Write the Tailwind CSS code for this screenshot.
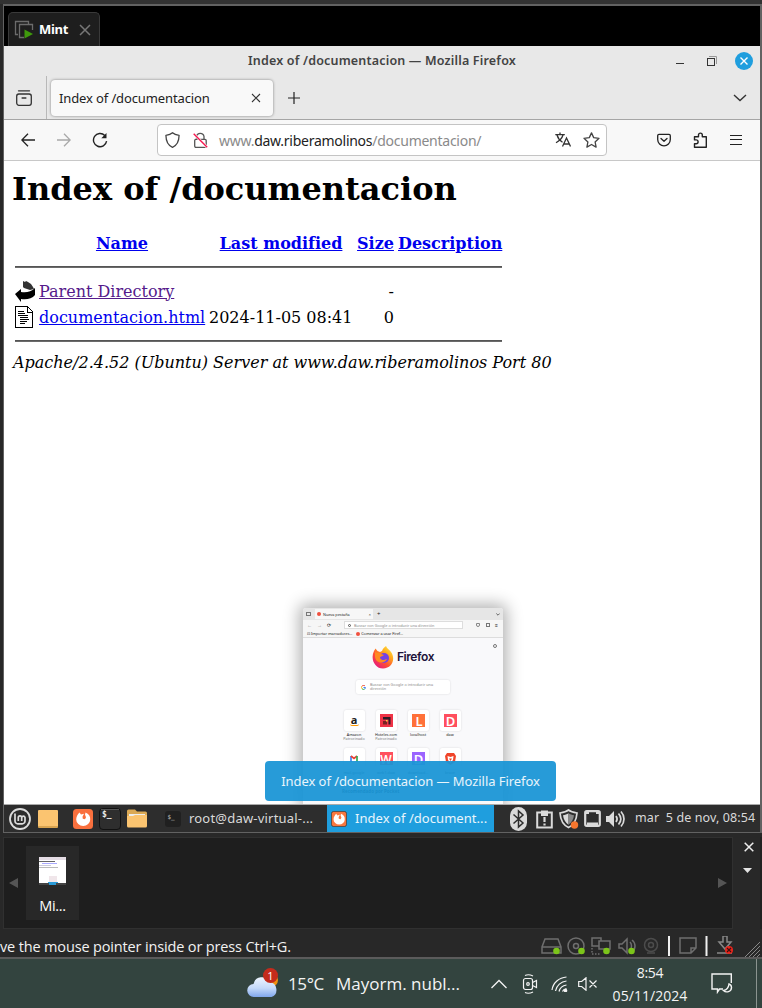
<!DOCTYPE html>
<html lang="es">
<head>
<meta charset="utf-8">
<title>Index of /documentacion</title>
<script src="https://cdn.jsdelivr.net/npm/@tailwindcss/browser@4"></script>
</head>
<body class="w-[762px] h-[1008px] overflow-hidden bg-[#282828] flex flex-col font-['Noto_Sans',sans-serif]">
<div class="h-1 shrink-0 bg-[#323232]"></div>

<!-- Virtual machine window -->
<div class="h-[829px] shrink-0 flex">
  <div class="w-[3px] shrink-0"></div>
  <main class="relative w-[759px] h-[829px] border-t-2 border-r-2 border-b border-l border-[#626262] flex flex-col">
    <div class="h-10 shrink-0 bg-black pl-1 pt-1.5">
      <div class="w-[92px] h-[34px] rounded-t-[5px] border border-b-0 border-[#3a3a3a] bg-[#1e1e1e] flex items-center pl-[5px]">
        <svg class="w-[20px] h-[19px] shrink-0" viewBox="0 0 20 19" fill="none"><path d="M4 14.500H1.500V1.500H14.500V4" stroke="#6c6c6c" stroke-width="1.300"/><path d="M10 17.500H5.500V4.500H18.500V10" stroke="#6c6c6c" stroke-width="1.300"/><path d="M10.500 9.500L19 14l-8.500 4.500z" fill="#3f9a0c"/></svg>
        <span class="ml-[5px] w-[29px] text-[13px] font-bold text-white tracking-[-0.3px] leading-none whitespace-nowrap">Mint</span>
        <svg class="ml-[11px] w-3 h-3" viewBox="0 0 12 12"><path d="M1 1l10 10M11 1L1 11" stroke="#777" stroke-width="1.500"/></svg>
      </div>
    </div>

    <!-- Firefox title bar and tabs -->
    <div class="h-[74px] shrink-0 bg-[#e8e8e8] border-b border-[#a5a5a5] flex flex-col">
      <div class="h-[30px] shrink-0 relative flex items-center justify-center">
        <span class="pt-px text-[12.500px] font-semibold text-[#434343] tracking-[0.18px] whitespace-nowrap">Index of /documentacion — Mozilla Firefox</span>
        <div class="absolute right-[7px] top-[6px] flex items-center">
          <svg class="w-[54px] h-[18px]" viewBox="0 0 54 18" fill="none" stroke="#333"><path d="M2 11.500h8"/><rect x="33.500" y="6.500" width="7" height="7"/><path d="M35 4.500h7.500V12" stroke="#999"/></svg>
          <svg class="w-[18px] h-[18px] ml-[7px]" viewBox="0 0 18 18"><circle cx="9" cy="9" r="9" fill="#1f9ede"/><path d="M5.500 5.500l7 7M12.500 5.500l-7 7" stroke="#fff" stroke-width="1.400"/></svg>
        </div>
      </div>
      <div class="flex-1 flex">
        <div class="w-[43px] border-r border-[#b8b8b8] flex items-center pl-3">
          <svg class="w-4 h-4" viewBox="0 0 16 16" fill="none" stroke="#333" stroke-width="1.300" stroke-linecap="round"><path d="M2.500 .8h11"/><rect x=".7" y="4" width="14.600" height="11.300" rx="2.200"/><path d="M6.200 8h3.600" stroke-width="1.600"/></svg>
        </div>
        <div class="ml-[4px] mt-[4px] w-[222px] h-[36px] rounded-[4px] bg-[#f9f9f9] shadow-[0_0_3px_rgba(0,0,0,0.45)] flex items-center">
          <span class="ml-[8px] w-[192px] pt-px text-[13px] tracking-[-0.12px] text-[#222] whitespace-nowrap">Index of /documentacion</span>
          <svg class="w-[10px] h-[10px]" viewBox="0 0 10 10"><path d="M1 1l8 8M9 1L1 9" stroke="#333" stroke-width="1.100"/></svg>
        </div>
        <svg class="ml-[14px] mt-[15px] w-[14px] h-[14px]" viewBox="0 0 14 14"><path d="M7 1v12M1 7h12" stroke="#222" stroke-width="1.200"/></svg>
        <svg class="ml-auto mr-[13px] mt-[17px] w-[14px] h-[10px]" viewBox="0 0 14 10"><path d="M1 2l6 5.500L13 2" fill="none" stroke="#333" stroke-width="1.400"/></svg>
      </div>
    </div>

    <!-- Navigation bar -->
    <div class="h-[41px] shrink-0 bg-[#f8f8f8] border-b border-[#c8c8c8] flex items-center">
      <svg class="ml-[17px] w-[14px] h-[14px]" viewBox="0 0 14 14" fill="none" stroke="#222" stroke-width="1.300"><path d="M14 7H.8M7 .8L.8 7 7 13.200"/></svg>
      <svg class="ml-[22px] w-[14px] h-[14px]" viewBox="0 0 14 14" fill="none" stroke="#a8a8a8" stroke-width="1.300"><path d="M0 7h13.200M7 .8L13.200 7 7 13.200"/></svg>
      <svg class="ml-[21px] w-4 h-4" viewBox="0 0 16 16" fill="none" stroke="#222" stroke-width="1.400"><path d="M12.800 3.500A6.600 6.600 0 1 0 14.600 9.200"/><path d="M14.500 1v5.200H9.300z" fill="#222" stroke="none"/></svg>
      <div class="ml-[49px] w-[450px] h-8 rounded-[4px] border border-[#c4c4c4] bg-white flex items-center">
        <svg class="ml-[7px] w-[15px] h-4 shrink-0" viewBox="0 0 15 16" fill="none" stroke="#444" stroke-width="1.300"><path d="M7.500.8C6 2.200 3.500 3 .9 3.300 1 9 3 13.500 7.500 15.300 12 13.500 14 9 14.100 3.300 11.500 3 9 2.200 7.500.8z" stroke-linejoin="round"/></svg>
        <svg class="ml-[13px] w-[15px] h-4 shrink-0" viewBox="0 0 15 16" fill="none" stroke="#555" stroke-width="1.300"><path d="M3.500 7V4.500a3.800 3.800 0 0 1 7.500 0V7"/><rect x="1.700" y="7.300" width="11.500" height="8" rx="1.200"/><path d="M.7 1.800l13.500 13.500" stroke="#fff" stroke-width="2.600"/><path d="M.7 1.800l13.500 13.500" stroke="#f5174f" stroke-width="1.400"/></svg>
        <span class="ml-[11px] w-[336px] text-[14px] tracking-[-0.26px] text-[#8a8a8a] whitespace-nowrap">www.<span class="text-[#222]">daw.riberamolinos</span>/documentacion/</span>
        <svg class="w-4 h-4 shrink-0" viewBox="0 0 16 16" fill="none" stroke="#333" stroke-width="1.300"><path d="M.3 2.700h9.500M5 .5v2M8 3C7 6.500 4 9 1 10.700M2 3c1 3.500 3.500 6 5.500 7.200"/><path d="M7.500 14.500L11.500 6l4 8.500M9 12h5"/></svg>
        <svg class="ml-3 w-[17px] h-4 shrink-0" viewBox="0 0 17 16" fill="none" stroke="#444" stroke-width="1.300" stroke-linejoin="round"><path d="M8.500.9l2.200 4.700 5.300.7-3.900 3.600 1 5.200-4.600-2.600-4.600 2.600 1-5.200L1 6.300l5.300-.7z"/></svg>
      </div>
      <svg class="ml-[50px] w-[14px] h-[14px]" viewBox="0 0 14 14" fill="none" stroke="#222" stroke-width="1.300"><path d="M2 1.400h10a1.300 1.300 0 0 1 1.300 1.300V6.500a6.300 6.300 0 0 1-12.600 0V2.700A1.300 1.300 0 0 1 2 1.400z"/><path d="M4 5.500l3 2.800 3-2.800" stroke-linecap="round" stroke-linejoin="round"/></svg>
      <svg class="ml-[22px] w-[15px] h-4" viewBox="0 0 15 16" fill="none" stroke="#222" stroke-width="1.400" stroke-linejoin="round"><path d="M1.500 7.500V4.700h4V3a1.900 1.900 0 0 1 3.800 0v1.700h4V15.200H1.500v-3.500h1.700a1.900 1.900 0 0 0 0-3.800H1.500z"/></svg>
      <svg class="ml-[22px] w-3 h-3" viewBox="0 0 12 12" shape-rendering="crispEdges"><path d="M0 1.500h12M0 5.500h12M0 10.500h12" stroke="#222"/></svg>
    </div>

    <!-- Directory listing -->
    <div class="h-[643px] shrink-0 bg-white text-black pl-2 pt-[10px] font-['DejaVu_Serif',serif] text-[16px] leading-[19px]">
      <h1 class="text-[32px] leading-[37px] font-bold">Index of /documentacion</h1>
      <table class="mt-[23px] w-[493px] table-fixed border-separate border-spacing-[2px] whitespace-nowrap">
        <colgroup><col class="w-[22px]"><col class="w-[168px]"><col class="w-[146px]"><col class="w-[39px]"><col class="w-[106px]"></colgroup>
        <tbody>
        <tr class="h-[22px] align-top"><th class="p-0"></th><th class="p-px"><a class="underline text-[#0000ee]">Name</a></th><th class="p-px"><a class="underline text-[#0000ee]">Last modified</a></th><th class="p-px"><a class="underline text-[#0000ee]">Size</a></th><th class="p-px"><a class="underline text-[#0000ee]">Description</a></th></tr>
        <tr class="h-5"><th colspan="5" class="p-px"><div class="h-[2px] bg-[#6b6b6b] border-t border-[#555]"></div></th></tr>
        <tr class="h-6"><td class="p-px"><svg class="block w-5 h-[22px]" viewBox="0 0 20 22"><path d="M8 1l2 1 1-1 2 1 3 2 2 3 1 2-4 1-3-1-3-1-1-1z" fill="#333"/><path d="M0 14l6-5v3c5 1 10 0 14-4v7c-3 4-9 5-14 4v3z" fill="#000"/></svg></td><td class="p-px"><a class="underline text-[#551a8b]">Parent Directory</a></td><td class="p-px"></td><td class="p-px text-right">-</td><td></td></tr>
        <tr class="h-6"><td class="p-px"><svg class="block w-5 h-[22px]" viewBox="0 0 20 22" shape-rendering="crispEdges"><path d="M.5.5h12l5 5v16H.5z" fill="#fff" stroke="#000"/><path d="M12.500 0v6H18" fill="none" stroke="#000"/><path d="M3 5.500h6M3 7.500h7M3 9.500h10M5 11.500h8M5 13.500h9M5 15.500h7M5 17.500h5" stroke="#000"/></svg></td><td class="p-px"><a class="underline text-[#0000ee]">documentacion.html</a></td><td class="p-px">2024-11-05 08:41</td><td class="p-px text-right">0</td><td></td></tr>
        <tr class="h-5"><th colspan="5" class="p-px"><div class="h-[2px] bg-[#6b6b6b] border-t border-[#555]"></div></th></tr>
        </tbody>
      </table>
      <address class="pl-px italic whitespace-nowrap">Apache/2.4.52 (Ubuntu) Server at www.daw.riberamolinos Port 80</address>
    </div>

    <!-- Desktop panel -->
    <div class="relative z-20 flex-1 border-t border-[#aaa] bg-[#2d2d2d] flex items-center text-[13px] text-[#dadada]">
      <svg class="ml-[5px] w-[22px] h-[22px]" viewBox="0 0 22 22" fill="none" stroke="#dcdcdc"><circle cx="11" cy="11" r="10" stroke-width="1.800"/><path d="M6 5.500v7.500a2.800 2.800 0 0 0 2.800 2.800h4.400A2.800 2.800 0 0 0 16 13V9.500a1.700 1.700 0 0 0-3.300 0V13M12.700 9.500a1.700 1.700 0 0 0-3.400 0V13" stroke-width="1.700"/></svg>
      <div class="ml-[7px] w-5 h-[18px] rounded-[1px] bg-[#fbc470] border-b-2 border-[#d9a450]"></div>
      <svg class="ml-[15px] w-[20px] h-[20px]" viewBox="0 0 20 20"><rect width="20" height="20" rx="3.500" fill="#f9703e"/><path d="M6.500 3.500l1.500 2 3-.8-1.500 3 .3 2 2.200.5 1-2-1-2.500.5-2.200c3.300 1.300 5 4 4.700 7a7 6.500 0 0 1-14 0C3.200 8 4.500 5.500 6.500 3.500z" fill="#fff"/></svg>
      <svg class="ml-[6px] w-[22px] h-[22px]" viewBox="0 0 22 22"><rect x=".5" y=".5" width="21" height="21" rx="3.500" fill="#2e2e2e" stroke="#111"/><path d="M2 1.500h18" stroke="#555"/><text x="3" y="9" font-family="DejaVu Sans Mono" font-size="8" font-weight="bold" fill="#eee">$_</text></svg>
      <svg class="ml-[6px] w-[20px] h-[19px]" viewBox="0 0 20 19"><path d="M0 2a1.500 1.500 0 0 1 1.500-1.500H8l2 2h8.500A1.500 1.500 0 0 1 20 4v13H0z" fill="#dba955"/><path d="M2 5h16v3H2z" fill="#eee"/><path d="M0 7h6l2-1h12v11a1.500 1.500 0 0 1-1.500 1.500h-17A1.500 1.500 0 0 1 0 17z" fill="#fbc470"/></svg>
      <svg class="ml-[18px] w-[16px] h-[16px]" viewBox="0 0 16 16"><rect width="16" height="16" rx="3" fill="#202020"/><text x="2.500" y="7.500" font-family="DejaVu Sans Mono" font-size="6" font-weight="bold" fill="#999">$_</text></svg>
      <span class="ml-[8px] w-[138px] shrink-0 tracking-[0.2px] whitespace-nowrap">root@daw-virtual-...</span>
      <div class="w-[167px] h-full shrink-0 bg-[#1f9ede] text-white/90 flex items-center">
        <svg class="ml-[4px] w-4 h-4" viewBox="0 0 20 20"><rect x=".5" y=".5" width="19" height="19" rx="3" fill="#f9773e" stroke="#463c38"/><path d="M6.500 3.500l1.500 2 3-.8-1.500 3 .3 2 2.200.5 1-2-1-2.500.5-2.200c3.300 1.300 5 4 4.700 7a7 6.500 0 0 1-14 0C3.200 8 4.500 5.500 6.500 3.500z" fill="#fff"/></svg>
        <span class="ml-[8px] tracking-[0.05px] whitespace-nowrap">Index of /document...</span>
      </div>
      <svg class="ml-4 w-[17px] h-6 shrink-0" viewBox="0 0 17 24"><rect width="17" height="24" rx="8.500" fill="#dadada"/><path d="M3.500 7.500l9.500 8.500-4.500 4V4L13 8l-9.500 8.500" fill="none" stroke="#2d2d2d" stroke-width="1.500"/></svg>
      <svg class="ml-[9px] w-[17px] h-5 shrink-0" viewBox="0 0 17 20"><path d="M1.200 3.500h14.600v15H1.200z" fill="none" stroke="#dadada" stroke-width="2"/><path d="M5 1.500h7V7H5z" fill="#dadada"/><path d="M8.500 8v5M8.500 14.500v2" stroke="#dadada" stroke-width="2.200"/></svg>
      <svg class="ml-[6px] w-[20px] h-[20px] shrink-0" viewBox="0 0 20 20"><path d="M9.500 1C7 3 4 3.500 1 4c.5 7 3 12 8.500 14.500C15 16 17.500 11 18 4 15 3.500 12 3 9.500 1z" fill="none" stroke="#dadada" stroke-width="1.700"/><path d="M9.500 4.200v11.500C6.500 13.500 4.500 10.500 4 6.200c2-.4 4-1 5.500-2z" fill="#dadada"/><path d="M9.500 4.200v11.500c3-2.200 5-5.200 5.500-9.500-2-.4-4-1-5.500-2z" fill="#888"/><circle cx="15.500" cy="16" r="3.700" fill="#f5762e"/></svg>
      <svg class="ml-[5px] w-[17px] h-[17px] shrink-0" viewBox="0 0 17 17"><rect x="1.200" y="1.200" width="14.600" height="14.600" rx="1.500" fill="none" stroke="#dadada" stroke-width="2.200"/><path d="M2 2h3v2H2zM12 2h3v2h-3zM3 12.500h11v3H3z" fill="#dadada"/></svg>
      <svg class="ml-[5px] w-[19px] h-[18px] shrink-0" viewBox="0 0 19 18"><path d="M0 6h3l5-5v16l-5-5H0z" fill="#dadada"/><path d="M10 6c1.500 2 1.500 4 0 6M12.500 3.500c3 3.500 3 7.500 0 11M15 1.500c4 4.500 4 10.500 0 15" fill="none" stroke="#dadada" stroke-width="1.700"/></svg>
      <span class="ml-[10px] text-[12.500px] tracking-[0.1px] whitespace-pre">mar  5 de nov, 08:54</span>
    </div>

    <!-- Window preview -->
    <div class="absolute z-10 left-[299px] top-[602px] w-[200px] h-[197px] bg-[#f9f9fb] rounded-t-[3px] shadow-[0_0_16px_4px_rgba(0,0,0,0.3)] text-[#222] text-[3.800px] leading-[5px] whitespace-nowrap flex flex-col">
      <div class="h-3 shrink-0 bg-[#e6e6e6] rounded-t-[3px] flex items-center pl-[3px]">
        <div class="w-[5px] h-[4px] border border-[#777]"></div>
        <div class="ml-[4px] w-[58px] h-[10px] bg-[#f7f7f7] flex items-center pl-[2px]"><div class="w-1 h-1 rounded-full bg-[#f0503e]"></div><span class="ml-[2px]">Nueva pestaña</span><span class="ml-auto mr-[2px]">×</span></div>
        <span class="ml-[4px] text-[6px]">+</span>
        <svg class="ml-auto mr-[3px] w-1 h-[3px]" viewBox="0 0 4 3"><path d="M.3.5L2 2.200 3.700.5" fill="none" stroke="#444" stroke-width=".8"/></svg>
      </div>
      <div class="h-[10px] shrink-0 bg-[#f6f6f6] flex items-center pl-[4px] text-[5px]">
        <span class="text-[#999]">←</span><span class="ml-[5px] text-[#999]">→</span><span class="ml-[5px]">⟳</span>
        <div class="ml-auto w-[119px] h-[8px] bg-white border-[0.500px] border-[#ddd] flex items-center pl-[3px] text-[3.800px] text-[#888]"><div class="w-[3px] h-[3px] mr-[3px] rounded-full border-[0.500px] border-[#555]"></div>Buscar con Google o introducir una dirección</div>
        <div class="ml-[13px] w-1 h-1 border border-[#888] rounded-b"></div><div class="ml-[6px] w-1 h-1 border border-[#777]"></div><span class="ml-[5px] mr-[5px]">≡</span>
      </div>
      <div class="h-[8px] shrink-0 bg-[#f6f6f6] border-b-[0.500px] border-[#ddd] flex items-center pl-[4px] text-[3.900px] tracking-[-0.05px]"><span>⊡ Importar marcadores...</span><div class="ml-[4px] w-1 h-1 rounded-full bg-[#f0503e]"></div><span class="ml-px">Comenzar a usar Firef...</span></div>
      <div class="h-[42px] shrink-0 relative flex justify-center pt-[8px]">
        <svg class="w-[22px] h-[23px]" viewBox="0 0 22 23"><defs><linearGradient id="fire" x1="1" y1="0" x2=".2" y2="1"><stop offset="0" stop-color="#fff44f"/><stop offset=".35" stop-color="#ffad1f"/><stop offset=".65" stop-color="#ff5030"/><stop offset="1" stop-color="#e31587"/></linearGradient></defs><path d="M2 5l1.500-2.500L5.500 5 8 6l2-1c1-3 3-4 4-5 1 3 3 3 5 6 5 7 1 16.500-8 16.500C3 22.500-2 13 2 5z" fill="url(#fire)"/><circle cx="12" cy="12" r="5" fill="#7542e5"/><path d="M3 6c2 1 4 0 6 2l3 1c-2 2-4 1-4 3 2 3 4 2 7 1-2 5-11 5-12-2z" fill="#ff8a20"/></svg>
        <span class="ml-[3px] mt-[5px] text-[12px] leading-[12px] font-semibold text-[#20123a] tracking-[-0.4px] font-['Inter',sans-serif]">Firefox</span>
        <div class="absolute right-[6px] top-[6px] w-[4px] h-[4px] rounded-full border border-[#777]"></div>
      </div>
      <div class="ml-[53px] w-[94px] h-[14px] shrink-0 bg-white rounded-[2px] shadow-[0_0_2px_rgba(0,0,0,0.15)] flex items-center pl-[5px] text-[#888]">
        <svg class="w-[5px] h-[5px]" viewBox="0 0 10 10" fill="none" stroke-width="2"><path d="M8 2A4 4 0 0 0 1.500 3" stroke="#ea4335"/><path d="M1.500 3A4 4 0 0 0 2 7.500" stroke="#fbbc05"/><path d="M2 7.500A4 4 0 0 0 7.500 8" stroke="#34a853"/><path d="M7.500 8A4 4 0 0 0 9 5H5" stroke="#4285f4"/></svg>
        <span class="ml-[4px] leading-[4px]">Buscar con Google o introducir una<br>dirección</span>
      </div>
      <div class="mt-[16px] ml-[35px] grid grid-cols-[32px_32px_32px_32px] text-center leading-[4px]">
        <div class="h-[38px] flex flex-col items-center"><div class="w-[21px] h-[21px] shrink-0 mb-[2px] rounded-[2px] bg-white shadow-[0_0_2px_rgba(0,0,0,0.15)] flex flex-col items-center justify-center"><b class="text-[11px] leading-[9px]">a</b><div class="w-[9px] h-[2px] rounded-b-full border-b border-[#f90]"></div></div>Amazon<br><span class="text-[#777]">Patrocinado</span></div>
        <div class="h-[38px] flex flex-col items-center"><div class="w-[21px] h-[21px] shrink-0 mb-[2px] rounded-[2px] bg-white shadow-[0_0_2px_rgba(0,0,0,0.15)] flex items-center justify-center"><svg class="w-[13px] h-[13px]" viewBox="0 0 13 13"><path d="M0 0h13v13H0z" fill="#ef3346"/><path d="M3 3h7.500v7.500H8.500v-5H3z" fill="#2b1b24"/><path d="M3 7h4v3.500H3z" fill="#722"/><path d="M6 6h1.500v1.500H6z" fill="#fc4"/></svg></div>Hoteles.com<br><span class="text-[#777]">Patrocinado</span></div>
        <div class="h-[38px] flex flex-col items-center"><div class="w-[21px] h-[21px] shrink-0 mb-[2px] rounded-[2px] bg-white shadow-[0_0_2px_rgba(0,0,0,0.15)] flex items-center justify-center"><div class="w-[13px] h-[13px] pl-[2px] bg-[#ff7139] text-white text-[13px] leading-[15px] font-semibold">L</div></div>localhost</div>
        <div class="h-[38px] flex flex-col items-center"><div class="w-[21px] h-[21px] shrink-0 mb-[2px] rounded-[2px] bg-white shadow-[0_0_2px_rgba(0,0,0,0.15)] flex items-center justify-center"><div class="w-[13px] h-[13px] pl-px bg-[#ff4f5e] text-white text-[13px] leading-[15px] font-semibold">D</div></div>daw</div>
        <div class="flex flex-col items-center"><div class="w-[21px] h-[21px] shrink-0 mb-[2px] rounded-[2px] bg-white shadow-[0_0_2px_rgba(0,0,0,0.15)] flex items-center justify-center"><svg class="w-2 h-[7px]" viewBox="0 0 8 7" fill="none" stroke-width="1.700"><path d="M1 7V1" stroke="#4285f4"/><path d="M1 1l3 2.500L7 1" stroke="#ea4335"/><path d="M7 1v6" stroke="#34a853"/></svg></div>mail.google</div>
        <div class="flex flex-col items-center"><div class="w-[21px] h-[21px] shrink-0 mb-[2px] rounded-[2px] bg-white shadow-[0_0_2px_rgba(0,0,0,0.15)] flex items-center justify-center"><div class="w-[13px] h-[13px] bg-[#ff4f5e] text-white text-[12px] leading-[15px] font-semibold">W</div></div>web1.daw</div>
        <div class="flex flex-col items-center"><div class="w-[21px] h-[21px] shrink-0 mb-[2px] rounded-[2px] bg-white shadow-[0_0_2px_rgba(0,0,0,0.15)] flex items-center justify-center"><div class="w-[13px] h-[13px] pl-px bg-[#9b64ff] text-white text-[13px] leading-[15px] font-semibold">D</div></div>download...</div>
        <div class="flex flex-col items-center"><div class="w-[21px] h-[21px] shrink-0 mb-[2px] rounded-[2px] bg-white shadow-[0_0_2px_rgba(0,0,0,0.15)] flex items-center justify-center"><svg class="w-[11px] h-[12px]" viewBox="0 0 11 12"><path d="M2 0h7l2 3-1 6-4.500 3L1 9 0 3z" fill="#f0452a"/><path d="M2.500 3l3 1 3-1-.5 4-2.500 3L3 7z" fill="#fff"/><path d="M4 5.500h3L5.500 8z" fill="#f0452a"/></svg></div>brave</div>
      </div>
      <div class="mt-[14px] ml-[39px] text-[4.500px] font-bold">Recomendado por Pocket</div>
    </div>
    <div class="absolute z-10 left-[261px] top-[755px] w-[291px] h-10 pt-px rounded-[4px] bg-[#1a95d6]/94 flex items-center justify-center text-[13px] text-white/90 tracking-[-0.06px] whitespace-nowrap">Index of /documentacion — Mozilla Firefox</div>
  </main>
</div>

<!-- Thumbnail bar -->
<div class="mt-1 h-[92px] shrink-0 flex">
  <div class="ml-[3px] w-[730px] h-[92px] border border-[#303030] bg-[#1e1e1e] flex items-center">
    <svg class="ml-[5px] w-[9px] h-[10px]" viewBox="0 0 9 10"><path d="M9 0v10L0 5z" fill="#555"/></svg>
    <div class="ml-2 w-[53px] h-[74px] bg-[#282828] flex flex-col items-center">
      <div class="mt-[11px] w-[27px] h-7 shrink-0 bg-white flex flex-col">
        <div class="h-[3px] bg-[#e4dce4]"></div><div class="mt-px w-[16px] h-px bg-[#666]"></div><div class="mt-px ml-[3px] w-[15px] h-px bg-[#aaf]"></div><div class="mt-px w-[12px] h-px bg-[#ccd]"></div><div class="mt-px w-[19px] h-px bg-[#bbb]"></div>
        <div class="mt-auto mx-auto w-[8px] h-[6px] bg-[#f0e6ea]"></div><div class="mx-auto w-[10px] h-px bg-[#2a9bd8]"></div><div class="h-[2px] bg-[#444] flex justify-center"><div class="w-[7px] bg-[#2a9bd8]"></div></div>
      </div>
      <span class="mt-[12px] font-['Open_Sans',sans-serif] text-[14.500px] leading-[18px] text-white tracking-[-0.3px]">Mi...</span>
    </div>
    <svg class="ml-auto mr-[5px] w-[9px] h-[10px]" viewBox="0 0 9 10"><path d="M0 0v10l9-5z" fill="#555"/></svg>
  </div>
  <div class="flex-1 pl-[11px] pt-[5px] flex flex-col">
    <svg class="w-[10px] h-[10px]" viewBox="0 0 10 10"><path d="M.7.7l8.600 8.600M9.300.7L.7 9.300" stroke="#eee" stroke-width="1.500"/></svg>
    <svg class="mt-4 -ml-px w-[9px] h-[5px]" viewBox="0 0 9 5"><path d="M0 0h9L4.500 5z" fill="#e4e4e4"/></svg>
  </div>
  <div class="w-[2px] bg-[#222]"></div>
</div>

<!-- Status line -->
<div class="h-7 shrink-0 flex items-center pt-[6px] overflow-hidden font-['Open_Sans',sans-serif]">
  <span class="w-[541px] shrink-0 text-[14.500px] leading-[19px] tracking-[-0.15px] text-[#f2f2f2] whitespace-nowrap">ve the mouse pointer inside or press Ctrl+G.</span>
  <svg class="w-[221px] h-[22px] mt-[2px] shrink-0" viewBox="0 0 221 22" fill="none" stroke="#6e6e6e" stroke-width="1.500"><path d="M4 3h13l3 8v6H1v-6zM1 11h19"/><g><circle cx="35" cy="10" r="8"/><circle cx="35" cy="10" r="2.500"/></g><path d="M51 2h9v8h-9z"/><path d="M58 5h11v8H58z" fill="#282828"/><path d="M51 12v6h9" stroke-dasharray="1.500 1.500"/><path d="M78 8h3l5-5v14l-5-5h-3zM89 6c2 2 2 6 0 8M91 4c4 3 4 9 0 12"/><g stroke="#4c4c4c"><circle cx="110" cy="9" r="6.500"/><circle cx="110" cy="9" r="2.500"/><path d="M106 17h8"/></g><path d="M128 0v20M165.500 0v20" stroke="#f0f0f0" stroke-width="2"/><path d="M139 2h16v10l-5 5h-11zM155 12h-5v5"/><path d="M182 0v6h-4l6 7 6-7h-4V0zM176 17h15" stroke="#888"/><g fill="#7cc51a" stroke="none"><circle cx="15.500" cy="15" r="3.300"/><circle cx="40.500" cy="15" r="3.300"/><circle cx="65.500" cy="15" r="3.300"/><circle cx="90.500" cy="15" r="3.300"/></g><circle cx="188" cy="14" r="4" fill="#e8251c" stroke="none"/><path d="M186 12l4 4M190 12l-4 4" stroke="#3a1010" stroke-width="1.200"/><path d="M204 21l15-15M208 21l11-11M212 21l7-7M216 21l3-3" stroke="#888" stroke-width="1"/></svg>
</div>
<!-- Host taskbar -->
<div class="h-[51px] shrink-0 border-t-2 border-[#5b5b5b] bg-[#33443f] flex items-center text-[#f4f4f4] font-['Open_Sans',sans-serif] whitespace-nowrap">
  <svg class="ml-[247px] -mt-px w-[32px] h-[30px] shrink-0" viewBox="0 0 32 30"><defs><linearGradient id="cloud" x1="0" y1="0" x2="0" y2="1"><stop offset="0" stop-color="#eef5ff"/><stop offset=".55" stop-color="#c5dafa"/><stop offset="1" stop-color="#7fa6ec"/></linearGradient></defs><circle cx="24" cy="12" r="7" fill="#f0900e"/><path d="M7 29a6.500 6.500 0 0 1-.5-13 8.500 8.500 0 0 1 16-2 7.800 7.800 0 0 1 2 15z" fill="url(#cloud)"/><circle cx="23.500" cy="7.500" r="7.500" fill="#c42b1c"/><text x="23.500" y="11.500" text-anchor="middle" font-size="11" fill="#fff">1</text></svg>
  <span class="ml-[9px] w-[48px] pt-px text-[17px] tracking-[-0.4px]">15°C</span>
  <span class="w-[155px] pt-px text-[17px]">Mayorm. nubl...</span>
  <svg class="w-4 h-[10px] shrink-0" viewBox="0 0 16 10"><path d="M.5 9L8 1.500 15.500 9" fill="none" stroke="#f4f4f4" stroke-width="1.300"/></svg>
  <svg class="ml-[15px] w-[16px] h-[20px] shrink-0" viewBox="0 0 16 20" fill="none" stroke="#f4f4f4" stroke-width="1.200"><rect x="1.500" y="4.500" width="9" height="11" rx="2"/><path d="M10.500 8.500l4-2v7l-4-2M3 1.500C5 .5 8 .5 11 2M3 18.500c2 1 5 1 8-.5"/><circle cx="6" cy="10" r="1.300"/></svg>
  <svg class="ml-[13px] w-[17px] h-[16px] shrink-0" viewBox="0 0 17 16" fill="none" stroke="#f4f4f4" stroke-width="1.200"><path d="M1 14C2 7 8 1.500 15.500 1M4.500 15c1-5.500 5.500-9.500 11-10M8 15.500c.8-3.500 4-6 7.500-6.500M11.500 15.500c.5-1.500 2-2.500 4-3"/><circle cx="14.500" cy="14.500" r="1.200" fill="#f4f4f4"/></svg>
  <svg class="ml-[10px] w-[20px] h-[14px] shrink-0" viewBox="0 0 20 14" fill="none" stroke="#f4f4f4" stroke-width="1.200"><path d="M.7 4.500h3L8 .8v12.400L3.700 9.500h-3zM11.500 3.500l7 7M18.500 3.500l-7 7"/></svg>
  <div class="ml-[7px] w-[90px] flex flex-col items-center text-[14px] leading-[23px]"><span class="tracking-[-0.3px]">8:54</span><span class="tracking-[0.05px]">05/11/2024</span></div>
  <svg class="ml-[16px] w-[22px] h-[21px] shrink-0" viewBox="0 0 22 21" fill="none" stroke="#f4f4f4" stroke-width="1.400"><path d="M12 16H8.500l-2 3v-3H1V1h19.300v9"/><path d="M18 11c-.5 4-2 6-5.500 6.500 2.500 2.500 8 1.500 8-3 0-1.500-1-3-2.500-3.500z"/></svg>
  <div class="ml-auto mr-[5px] w-px h-full bg-[#8b9490]"></div>
</div>
</body>
</html>
